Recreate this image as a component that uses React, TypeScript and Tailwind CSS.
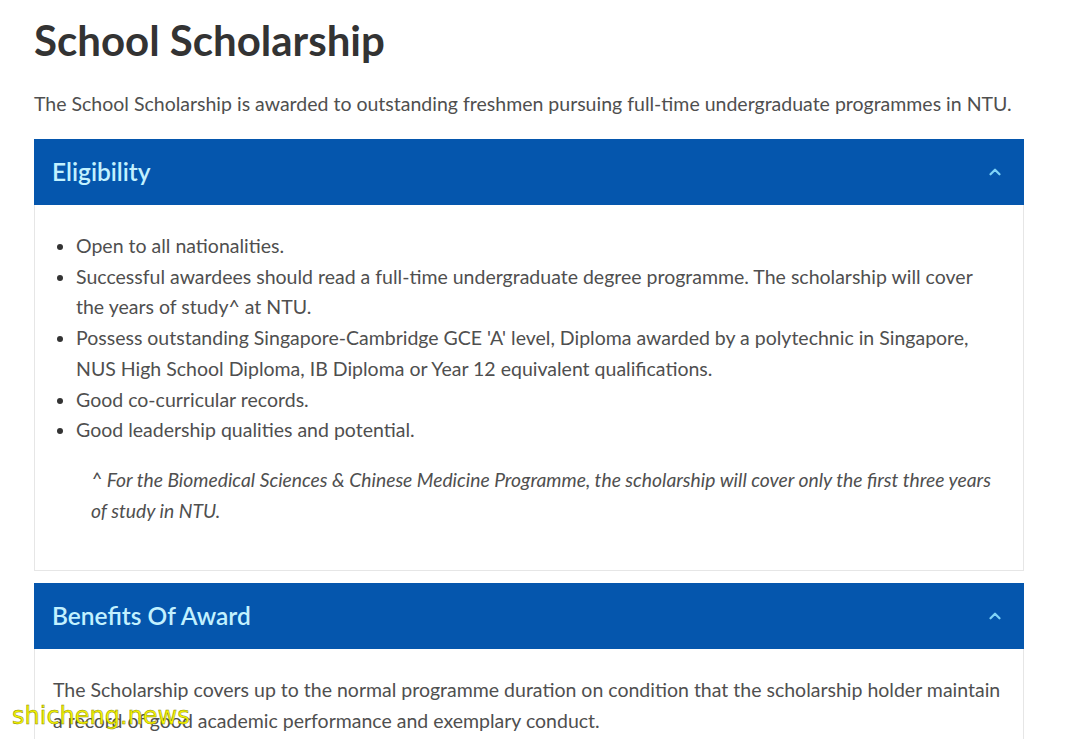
import { ChevronUp } from "lucide-react";

const eligibility = [
  "Open to all nationalities.",
  "Successful awardees should read a full-time undergraduate degree programme. The scholarship will cover the years of study^ at NTU.",
  "Possess outstanding Singapore-Cambridge GCE 'A' level, Diploma awarded by a polytechnic in Singapore, NUS High School Diploma, IB Diploma or Year 12 equivalent qualifications.",
  "Good co-curricular records.",
  "Good leadership qualities and potential.",
];

function SectionHeader({ title }: { title: string }) {
  return (
    <div className="flex h-[66px] items-center justify-between bg-[#0556ad] pl-[18px] pr-[20px]">
      <h2 className="text-[24.5px] font-semibold text-[#c2f1ff]">{title}</h2>
      <ChevronUp className="h-[18px] w-[18px] text-[#7fd3f7]" strokeWidth={3} />
    </div>
  );
}

export default function App() {
  return (
    <div
      className="relative min-h-[739px] bg-white px-[34px] pt-[14px] text-[#4f4f4f]"
      style={{ fontFamily: "Lato, 'Open Sans', sans-serif" }}
    >
      <h1 className="text-[42px] font-bold leading-[52px] text-[#333]">School Scholarship</h1>
      <p className="mt-[24px] text-[19.5px] leading-[27px]">
        The School Scholarship is awarded to outstanding freshmen pursuing full-time undergraduate programmes in NTU.
      </p>

      <div className="mt-[22px] w-[990px]">
        <SectionHeader title="Eligibility" />
        <div className="border border-t-0 border-[#e6e6e6] pb-[44px] pt-[26px]">
          <ul className="list-disc pl-[41px] pr-[40px] text-[19.5px] leading-[30.7px] marker:text-[#333]">
            {eligibility.map((item) => (
              <li key={item}>{item}</li>
            ))}
          </ul>
          <p className="mt-[19px] pl-[56px] pr-[20px] text-[19.3px] italic leading-[30.7px]">
            ^ For the Biomedical Sciences &amp; Chinese Medicine Programme, the scholarship will cover only the first three years of study in NTU.
          </p>
        </div>

        <div className="mt-[12px]">
          <SectionHeader title="Benefits Of Award" />
          <div className="border border-t-0 border-[#e6e6e6] px-[18px] pt-[26px] pb-[30px]">
            <p className="text-[19.5px] leading-[30.7px]">
              The Scholarship covers up to the normal programme duration on condition that the scholarship holder maintain a record of good academic performance and exemplary conduct.
            </p>
          </div>
        </div>
      </div>

      <div
        className="absolute left-[12px] top-[704px] text-[24px] leading-none text-[#f5f500]"
        style={{ fontFamily: "'DejaVu Sans', sans-serif", WebkitTextStroke: "0.5px #8a8a00" }}
      >
        shicheng.news
      </div>
    </div>
  );
}
